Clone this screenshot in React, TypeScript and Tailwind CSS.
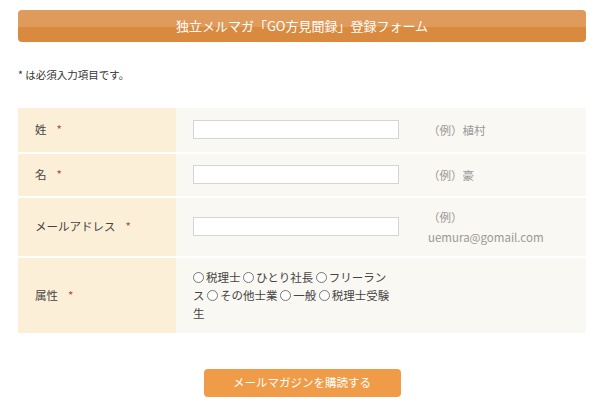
const font = "font-['Hiragino_Sans','Noto_Sans_CJK_JP','Liberation_Sans',sans-serif]";

function Req() {
  return <span className="ml-[10px] text-[#b5493e]">*</span>;
}

function Radio({ label }: { label: string }) {
  return (
    <>
      <span className="inline-block w-[11px] h-[11px] rounded-full border border-[#777] bg-white align-[-1px] mr-[2px]" />
      {label}{" "}
    </>
  );
}

const rows = [
  { label: "姓", example: "（例）植村" },
  { label: "名", example: "（例）豪" },
  { label: "メールアドレス", example: "email" },
];

export default function App() {
  return (
    <div className={`w-[600px] h-[415px] bg-white ${font}`}>
      <div className="ml-[18px] w-[568px] pt-[10px]">
        <div className="h-[32px] rounded-[4px] overflow-hidden flex flex-col relative">
          <div className="h-[17px] bg-[#df9b5b]" />
          <div className="flex-1 bg-[#da8a3e]" />
          <div className="absolute inset-0 flex items-center justify-center text-white text-[13px]">
            独立メルマガ「GO方見聞録」登録フォーム
          </div>
        </div>

        <p className="mt-[25px] text-[10.5px] text-[#333]">* は必須入力項目です。</p>

        <div className="mt-[25px] grid grid-cols-[158px_240px_1fr] gap-y-[2px] text-[11.5px] text-[#444]">
          {rows.map((r) => (
            <div key={r.label} className="contents">
              <div className="bg-[#fcefd7] pl-[17px] flex items-center">
                {r.label}
                <Req />
              </div>
              <div className={`bg-[#f9f8f3] pl-[17px] flex items-center ${r.example === "email" ? "h-[58px]" : r.label === "姓" ? "h-[44px]" : "h-[42px]"}`}>
                <input className="w-[206px] h-[19px] border border-[#d4d4d4] bg-white" />
              </div>
              <div className="bg-[#f9f8f3] pl-[12px] flex items-center text-[#999] leading-[20px]">
                {r.example === "email" ? (
                  <div>
                    （例）
                    <br />
                    uemura@gomail.com
                  </div>
                ) : (
                  r.example
                )}
              </div>
            </div>
          ))}
          <div className="bg-[#fcefd7] pl-[17px] flex items-center">
            属性
            <Req />
          </div>
          <div className="bg-[#f9f8f3] pl-[17px] pr-[23px] py-[10px] leading-[18px] h-[75px]">
            <Radio label="税理士" />
            <Radio label="ひとり社長" />
            <Radio label="フリーランス" />
            <Radio label="その他士業" />
            <Radio label="一般" />
            <Radio label="税理士受験生" />
          </div>
          <div className="bg-[#f9f8f3]" />
        </div>

        <div className="mt-[36px] flex justify-center">
          <button className="w-[197px] h-[28px] rounded-[4px] bg-[#ef9b47] text-white text-[11.5px]">
            メールマガジンを購読する
          </button>
        </div>
      </div>
    </div>
  );
}
